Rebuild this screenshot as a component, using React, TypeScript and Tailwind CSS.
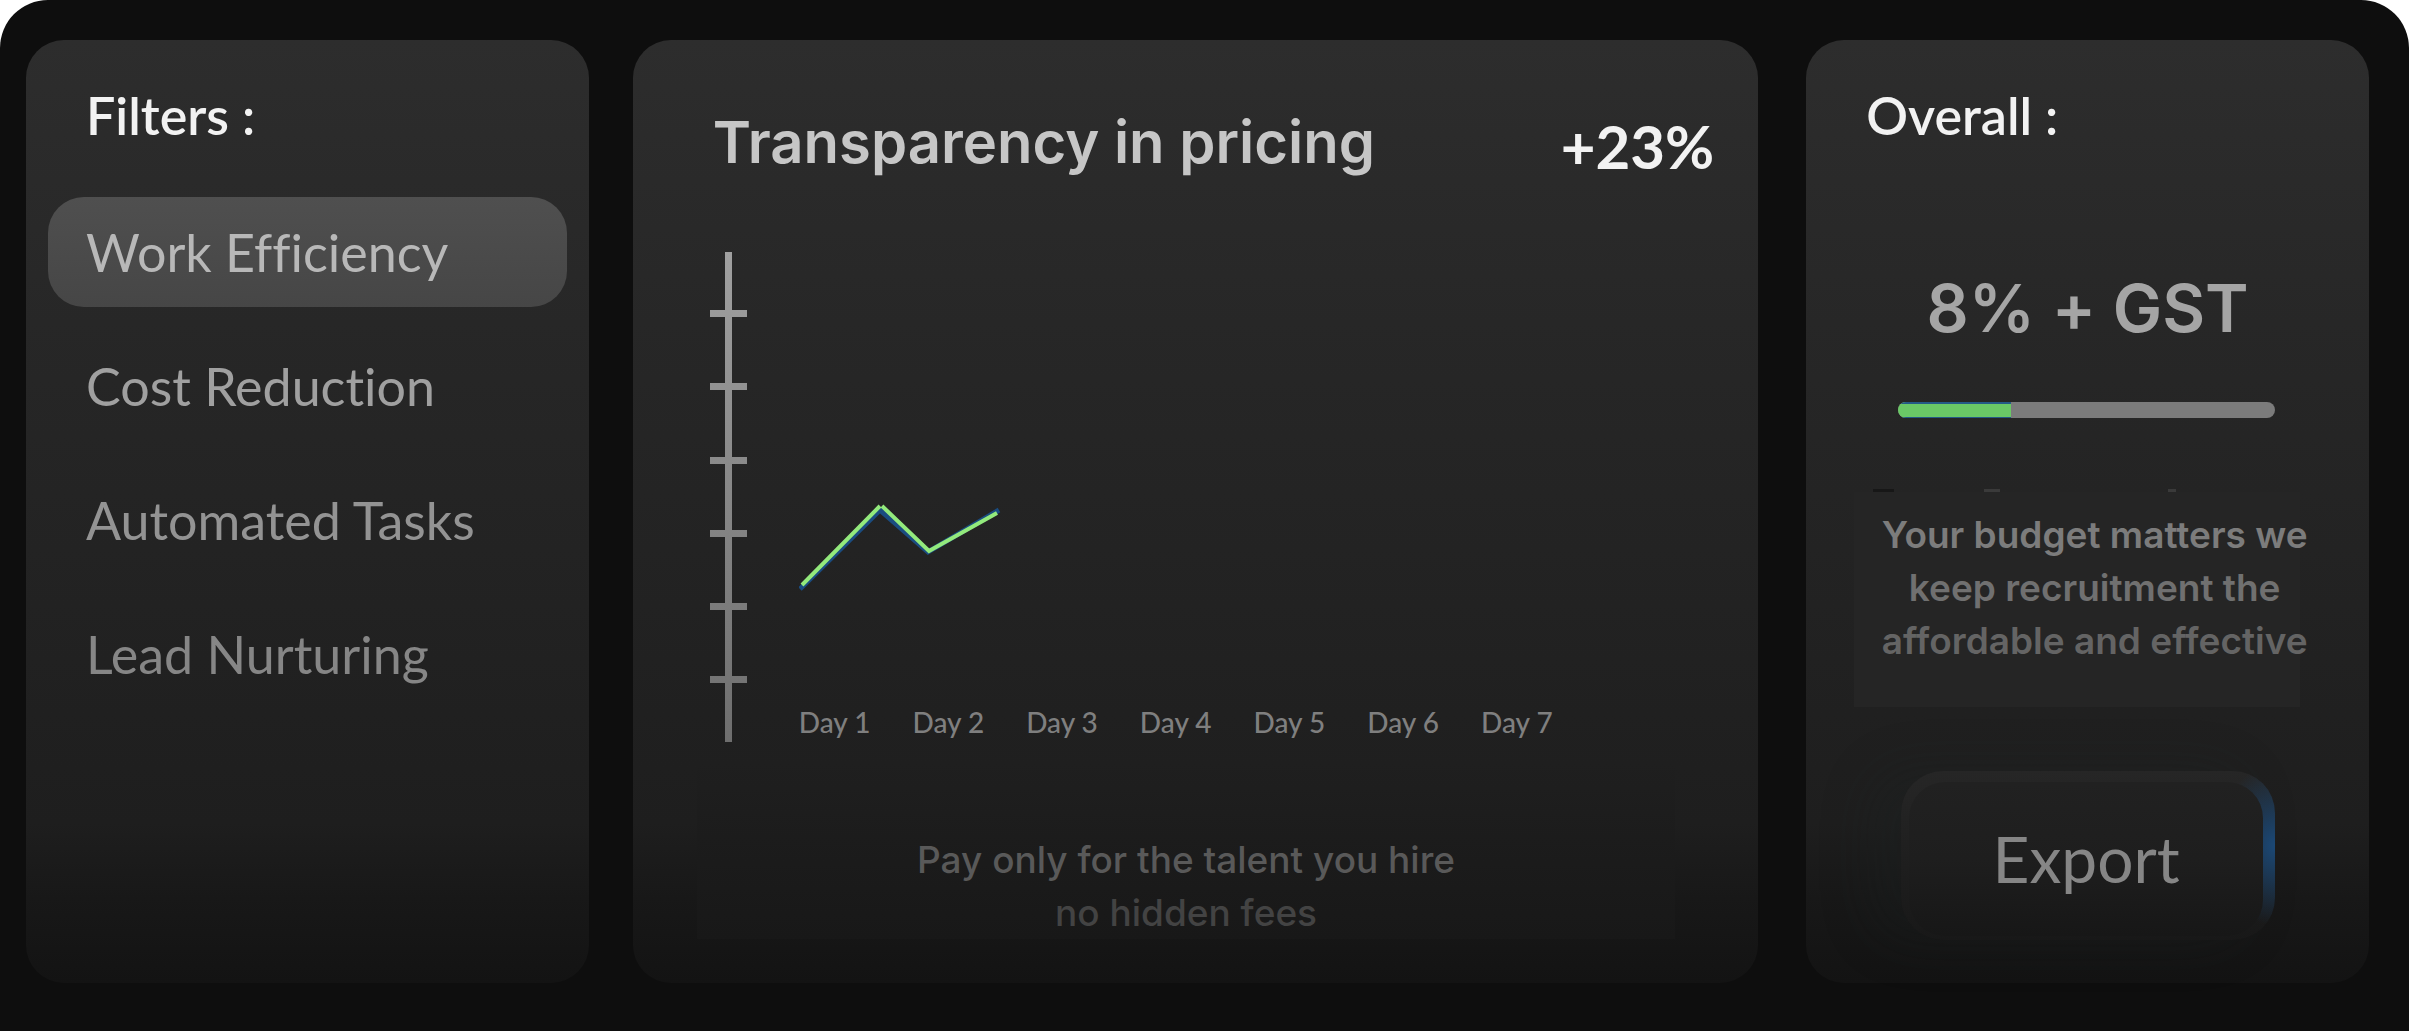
import React from "react";

const filters = [
  { label: "Work Efficiency", tone: "text-[#b8b8b8]", active: true },
  { label: "Cost Reduction", tone: "text-[#a0a0a0]", active: false },
  { label: "Automated Tasks", tone: "text-[#939393]", active: false },
  { label: "Lead Nurturing", tone: "text-[#868686]", active: false },
];

const days = ["Day 1", "Day 2", "Day 3", "Day 4", "Day 5", "Day 6", "Day 7"];
const ticks = [62, 135, 209, 282, 355, 428];

const card =
  "flex min-w-0 flex-col rounded-[38px] bg-[linear-gradient(180deg,#2d2d2d_0%,#272727_30%,#222222_60%,#1e1e1e_83%,#181818_91%,#131313_100%)]";

function CardHeading({ children }: { children: React.ReactNode }) {
  return (
    <h2 className="pt-[45px] pl-[60px] text-[52px] leading-[60px] font-semibold text-[#f2f2f2]">
      {children}
    </h2>
  );
}

function FiltersCard() {
  return (
    <section className={`${card} mr-11 flex-1`}>
      <CardHeading>Filters :</CardHeading>
      <nav className="mx-[22px] mt-[52px] flex flex-col gap-6">
        {filters.map((f) => (
          <button
            key={f.label}
            type="button"
            aria-pressed={f.active}
            className={`h-[110px] rounded-[36px] pl-[38px] text-left text-[52px] leading-[60px] whitespace-nowrap ${f.tone} ${
              f.active ? "bg-linear-to-b from-[#4f4f4f] to-[#464646]" : ""
            }`}
          >
            {f.label}
          </button>
        ))}
      </nav>
    </section>
  );
}

function Chart() {
  return (
    <div className="mt-[68px] flex pl-[77px]">
      <svg width="37" height="490" viewBox="0 0 37 490" aria-hidden="true" className="shrink-0">
        <defs>
          <linearGradient id="axis" gradientUnits="userSpaceOnUse" x1="0" y1="0" x2="0" y2="490">
            <stop offset="0" stopColor="#a0a0a0" />
            <stop offset="1" stopColor="#6e6e6e" />
          </linearGradient>
        </defs>
        <rect x="15" y="0" width="7" height="490" fill="url(#axis)" />
        {ticks.map((y) => (
          <rect key={y} x="0" y={y - 4} width="37" height="7" fill="url(#axis)" />
        ))}
      </svg>
      <div className="flex flex-col justify-end pl-[52px]">
        <svg width="220" height="100" viewBox="0 0 220 100" fill="none" role="img" aria-label="Pricing trend">
          <path d="M1 90 L81 11 L129 53 L200 11" stroke="#1a4c80" strokeWidth="5" />
          <path d="M3 86 L81 7 M83 7 L130 52 L198 14" stroke="#93ea7c" strokeWidth="4" strokeLinejoin="miter" />
        </svg>
        <div className="mt-[107px] flex gap-[42px] pb-1 text-[28px] leading-[32px] font-medium text-[#7f7f7f]">
          {days.map((d) => (
            <span key={d} className="whitespace-nowrap">
              {d}
            </span>
          ))}
        </div>
      </div>
    </div>
  );
}

function PricingCard() {
  return (
    <section className={`${card} mr-12 flex-2`}>
      <header className="mt-[60px] flex h-[84px] items-center justify-between pr-11 pl-20 leading-[84px]">
        <h1 className="font-['Inter',sans-serif] text-[58px] font-semibold text-[#c6c6c6]">
          Transparency in pricing
        </h1>
        <strong className="pt-2 text-[60px] font-bold text-[#f2f2f2]">+23%</strong>
      </header>
      <Chart />
      <p className="mt-5 mr-[83px] ml-16 bg-linear-to-b from-[#1f1f1f] to-[#181818] pt-[71px] text-center font-['Inter',sans-serif] text-[37px] leading-[53px] font-medium">
        <span className="block text-[#595959]">Pay only for the talent you hire</span>
        <span className="block text-[#434343]">no hidden fees</span>
      </p>
    </section>
  );
}

function OverallCard() {
  return (
    <section className={`${card} flex-1`}>
      <CardHeading>Overall :</CardHeading>
      <p className="mt-32 text-center font-['Inter',sans-serif] text-[66px] leading-[70px] font-semibold text-[#a5a5a5]">
        8% + GST
      </p>
      <div
        role="progressbar"
        aria-label="Overall fee"
        aria-valuenow={30}
        aria-valuemin={0}
        aria-valuemax={100}
        className="mr-[94px] ml-[92px] mt-[59px] h-4 overflow-hidden rounded-full bg-[#7b7b7b]"
      >
        <div className="h-full w-[30%] border-t-2 border-b border-[#245a86] bg-[#6ac866]" />
      </div>
      <div className="mt-[71px] ml-[67px] flex h-[3px]" aria-hidden="true">
        <span className="w-[21px] bg-[#171717]" />
        <span className="ml-[90px] w-4 bg-[#3a3a3a]" />
        <span className="ml-[168px] w-2 bg-[#3a3a3a]" />
      </div>
      <p className="mr-[34px] ml-12 bg-[linear-gradient(#252525,#252525)] bg-[length:446px_100%] bg-no-repeat pt-4 pb-10 text-center font-['Inter',sans-serif] text-[37px] leading-[53px] font-semibold whitespace-nowrap">
        <span className="block text-[#7c7c7c]">Your budget matters we</span>
        <span className="block text-[#707070]">keep recruitment the</span>
        <span className="block text-[#646464]">affordable and effective</span>
      </p>
      <button
        type="button"
        className="mr-[94px] ml-[95px] mt-16 h-[169px] rounded-[42px] bg-[radial-gradient(60px_80px_at_100%_44%,#1b4876_0%,#1b487600_100%),linear-gradient(180deg,#262626,#181818)] pt-[11px] pr-3 pb-1 pl-2 text-[64px] leading-[72px] text-[#868686] shadow-[-30px_0_50px_#1c222440]"
      >
        <span className="flex h-full items-center justify-center rounded-[36px] bg-linear-to-b from-[#212121] via-[#1e1e1e] to-[#171717]">
          Export
        </span>
      </button>
    </section>
  );
}

export default function App() {
  return (
    <div className="bg-white">
      <main className="flex min-h-screen rounded-t-[48px] bg-[#0e0e0e] pt-10 pr-10 pb-12 pl-[26px] font-['Lato',sans-serif] [font-variant-ligatures:none]">
        <FiltersCard />
        <PricingCard />
        <OverallCard />
      </main>
    </div>
  );
}
